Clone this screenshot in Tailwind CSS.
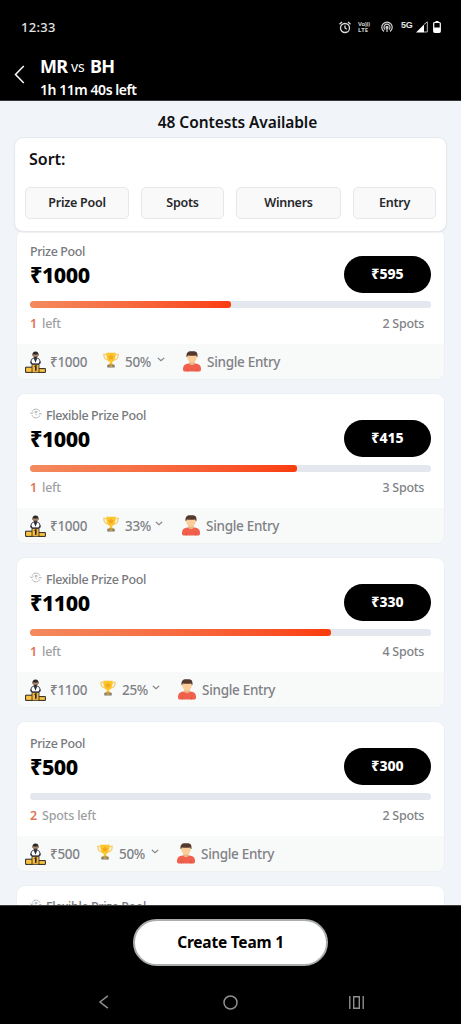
<!DOCTYPE html>
<html lang="en">
<head>
<meta charset="utf-8">
<title>Contests</title>
<script src="https://cdn.jsdelivr.net/npm/@tailwindcss/browser@4"></script>
</head>
<body class="w-[461px] h-[1024px] overflow-hidden bg-[#f1f5f9] font-['Noto_Sans','Open_Sans',sans-serif] flex flex-col">

<svg class="hidden">
  <symbol id="podium" viewBox="0 0 21 22">
    <path d="M.6 16.200h7v5.200H.6zM13.400 17.600h7v3.800h-7z" fill="#f9c440" stroke="#2b2523" stroke-width="1"/>
    <path d="M7 13.500h7v7.900H7z" fill="#f6b93b" stroke="#2b2523" stroke-width=".8"/>
    <path d="M9.600 15.700l1.200-.6v4.600" fill="none" stroke="#2b2523" stroke-width="1.600"/>
    <path d="M6 12.800c-.3-3.200.5-5.300 2.400-5.500h4.200c1.900.2 2.700 2.300 2.400 5.500z" fill="#fff" stroke="#2b2f3d" stroke-width=".9"/>
    <path d="M8.700 7.300l1.800 4.400 1.800-4.400z" fill="#2b2f3d"/>
    <path d="M5.600 10.500l1.500 2.300M15.400 10.500l-1.500 2.300" stroke="#2b2f3d" stroke-width="1.200"/>
    <circle cx="10.500" cy="4.300" r="2.400" fill="#b98468"/>
    <path d="M7.500 5.200C7 2 8.200.5 10.500.5S14 2 13.500 5.200c-.7-.6-.7-1.400-1-1.900-1.300.5-2.700.5-4 0-.3.500-.3 1.300-1 1.900zM8.300 5.300c1 .7 3.400.7 4.400 0-.2 2.500-4.200 2.500-4.400 0z" fill="#2b2725"/>
  </symbol>
  <symbol id="trophy" viewBox="0 0 16 16">
    <path d="M3.500 2.500H.8c0 3.200 1.200 5.100 4.200 5.600M12.500 2.500h2.700c0 3.200-1.200 5.100-4.200 5.600" fill="none" stroke="#f6cc74" stroke-width="1.300"/>
    <path d="M3.300.8h9.400c.2 5-1.100 8.600-3.600 9.300v2.200H6.900v-2.200C4.400 9.400 3.100 5.800 3.300.8z" fill="#fcc62d"/>
    <path d="M8 2l1 2 2.200.3-1.600 1.500.4 2.200-2-1-2 1 .4-2.200-1.600-1.500L7 4z" fill="#f5a81c"/>
    <path d="M6 11.700h4l.7 1.600H5.300z" fill="#e2a52d"/>
    <path d="M4.300 12.800h7.400v2.600H4.300z" fill="#857b62"/>
    <path d="M6.500 13.500h3v1.100h-3z" fill="#efc35a"/>
  </symbol>
  <symbol id="person" viewBox="0 0 18 21">
    <path d="M0 18.200c0-4 2.200-5.300 5.500-5.700h7c3.300.4 5.500 1.700 5.500 5.700 0 1.400-.8 2.300-2.100 2.300H2.100C.8 20.500 0 19.600 0 18.200z" fill="#f0604c"/>
    <path d="M6.300 9h5.400v3.600c-.7 2.200-4.700 2.200-5.400 0z" fill="#eab683"/>
    <path d="M4 4h10c.2 4.200-1.700 7.700-5 7.700S3.800 8.200 4 4z" fill="#fbcd9b"/>
    <path d="M3.600 6.200C3 2 4.800.2 8 .2h3.200c2.800.2 3.700 2.500 3.200 6-.8-.2-1-1-1.200-1.600-2.800.3-5.600.3-8.400 0-.2.600-.4 1.400-1.200 1.600z" fill="#54392f"/>
    <path d="M4.400 17.500v3M13.600 17.500v3" stroke="#d65442" stroke-width=".7"/>
  </symbol>
  <symbol id="chev" viewBox="0 0 8 5">
    <path d="M.8.900L4 3.800 7.200.9" fill="none" stroke="#808387" stroke-width="1.200"/>
  </symbol>
  <symbol id="flex" viewBox="0 0 12 11">
    <path d="M2.200 3.500a4.200 4.200 0 0 1 7.600 0M2.200 7.500a4.200 4.200 0 0 0 7.600 0" fill="none" stroke="#8b8d90" stroke-width=".8" stroke-dasharray="2 .6"/>
    <path d="M.3 4.400l1.400 1.500 1.500-1.500M8.800 6.500l1.500-1.500 1.400 1.500" fill="none" stroke="#8b8d90" stroke-width=".8"/>
    <path d="M4.800 3.500h2.600M4.800 4.600h2.600M5.300 5.500L6.700 7.400" stroke="#8b8d90" stroke-width=".6"/>
  </symbol>
</svg>

<header class="h-[101px] shrink-0 bg-black text-white flex flex-col border-b border-[#35373b]">
  <div class="h-[54px] flex items-center justify-between pl-[21px] pr-[20px] text-[#e4e4e4]">
    <span class="mt-px text-[13px] font-medium tracking-[0.3px]">12:33</span>
    <div class="flex items-center">
      <svg class="w-[12px] h-[13px]" viewBox="0 0 12 13" fill="none" stroke="#dcdcdc" stroke-width="1.300"><circle cx="6" cy="7" r="4.500"/><path d="M6 4.500V7l1.800 1.200M.5 3.200L3 1.100M11.500 3.200L9 1.100"/></svg>
      <div class="ml-[7px] w-[14px] flex flex-col text-[6px] leading-[6px] font-bold text-[#cfcfcf]"><span class="tracking-[-0.4px]">Vo)))</span><span>LTE</span></div>
      <svg class="ml-[9px] w-[12px] h-[12px]" viewBox="0 0 12 12" fill="none" stroke="#cfcfcf" stroke-width="1.200"><path d="M3 10.500a5.200 5.200 0 1 1 6 0M4.100 8.500a3 3 0 1 1 3.800 0"/><circle cx="6" cy="6.300" r="1" fill="#cfcfcf"/><path d="M6 7v4"/></svg>
      <span class="ml-[8px] -mt-[5px] w-[13px] text-[9px] leading-[8px] font-bold tracking-[-0.3px] font-['Liberation_Sans',sans-serif]">5G</span>
      <svg class="ml-[2px] w-[12px] h-[12px]" viewBox="0 0 12 12"><path d="M0 11.500L8 3.500v8z" fill="#fff"/><path d="M8 3.500L11.300.8v10.200H8" fill="none" stroke="#bbb" stroke-width="1"/></svg>
      <svg class="ml-[5px] w-[8px] h-[12px]" viewBox="0 0 8 12"><path d="M2.500 0h3v1.500h-3z" fill="#fff"/><rect x=".7" y="1.500" width="6.600" height="9.800" rx="1" fill="none" stroke="#fff" stroke-width="1.200"/><path d="M1 6.500h6V11H1z" fill="#fff"/></svg>
    </div>
  </div>
  <div class="flex pl-[14px]">
    <svg class="w-[11px] h-[19px] mt-[11px]" viewBox="0 0 11 19" fill="none" stroke="#fff" stroke-width="1.500"><path d="M9.800 1L1.500 9.500l8.300 8.500"/></svg>
    <div class="ml-[15px] flex flex-col whitespace-nowrap">
      <div class="h-[25px] flex items-center text-[18px] font-bold leading-[25px]"><span class="w-[28px] tracking-[-0.7px]">MR</span><span class="ml-[3px] w-[16px] text-[14px] font-normal -mt-px tracking-[-0.2px]">vs</span><span class="ml-[3px] tracking-[-0.8px]">BH</span></div>
      <div class="h-[20px] text-[14px] leading-[22px] font-semibold tracking-[-0.45px]">1h 11m 40s left</div>
    </div>
  </div>
</header>

<main class="h-[804px] shrink-0 overflow-hidden flex flex-col">
  <h1 class="h-[36px] shrink-0 pt-[10px] pl-[14px] text-center text-[15.500px] leading-[22px] font-semibold tracking-[-0.08px] text-[#101114]">48 Contests Available</h1>
  <section class="relative z-10 h-[95px] shrink-0 mx-[14px] rounded-[9px] bg-white border border-[#e6e9ec] shadow-[0_1px_1px_rgba(0,0,0,0.06)] px-[10px] whitespace-nowrap">
    <h2 class="pl-[4px] pt-[10px] h-[49px] text-[16px] leading-[22px] font-semibold tracking-[0px] text-[#101114]">Sort:</h2>
    <div class="flex gap-[12px] text-[12.500px] font-semibold tracking-[-0.25px] text-[#26282b]">
      <button class="w-[104px] h-[32px] rounded-[5px] border border-[#e6e7e8] bg-[#f9f9f9]">Prize Pool</button>
      <button class="w-[83px] h-[32px] rounded-[5px] border border-[#e6e7e8] bg-[#f9f9f9]">Spots</button>
      <button class="w-[105px] h-[32px] rounded-[5px] border border-[#e6e7e8] bg-[#f9f9f9]">Winners</button>
      <button class="w-[83px] h-[32px] rounded-[5px] border border-[#e6e7e8] bg-[#f9f9f9]">Entry</button>
    </div>
  </section>
  <div id="list" class="-mt-[3px] mx-[16px] flex flex-col gap-[13px]"></div>
</main>

<footer class="h-[119px] shrink-0 bg-black flex flex-col items-center border-t border-[#3c3c3c]">
  <button class="mt-[13px] w-[195px] h-[47px] rounded-full bg-white border-2 border-[#a9adac] text-[15.500px] font-bold tracking-[-0.22px] text-black">Create Team 1</button>
  <div class="mt-[27px] w-full flex items-center pl-[98px] h-[18px]">
    <svg class="w-[11px] h-[14px]" viewBox="0 0 11 14" fill="none" stroke="#8f8f8f" stroke-width="1.500"><path d="M9.800.8L2 7l7.800 6.200"/></svg>
    <svg class="ml-[114px] w-[15px] h-[15px]" viewBox="0 0 15 15" fill="none" stroke="#8f8f8f" stroke-width="1.500"><circle cx="7.500" cy="7.500" r="6.500"/></svg>
    <svg class="ml-[111px] w-[15px] h-[13px]" viewBox="0 0 15 13" fill="none" stroke="#8f8f8f" stroke-width="1.400"><path d="M.8 0v13M14.200 0v13M4.700.7h5.600v11.600H4.700z"/></svg>
  </div>
</footer>

<script>
const contests = [
  { prize: '₹1000', price: '₹595', fill: 50, left: ['1', 'left'], spots: '2 Spots', win: '50%', flex: false, wA: 53, wP: 32, gap: 18 },
  { prize: '₹1000', price: '₹415', fill: 66.7, left: ['1', 'left'], spots: '3 Spots', win: '33%', flex: true, wA: 53, wP: 30, gap: 19 },
  { prize: '₹1100', price: '₹330', fill: 75, left: ['1', 'left'], spots: '4 Spots', win: '25%', flex: true, wA: 50, wP: 30, gap: 18 },
  { prize: '₹500', price: '₹300', fill: 0, left: ['2', 'Spots left'], spots: '2 Spots', win: '50%', flex: false, wA: 47, wP: 32, gap: 18 },
  { flex: true },
];
const label = c => `
  <div class="h-[20px] flex items-center text-[12.500px] leading-[20px] font-medium tracking-[-0.4px] text-[#77797d]">
    ${c.flex ? '<svg class="w-[12px] h-[11px] mr-[4px] -mt-[5px]"><use href="#flex"/></svg>' : ''}<span>${c.flex ? 'Flexible Prize Pool' : 'Prize Pool'}</span>
  </div>`;
document.getElementById('list').innerHTML = contests.map(c => c.prize ? `
  <article class="h-[151px] shrink-0 rounded-[9px] bg-white overflow-hidden border border-[#ecf0f3] flex flex-col whitespace-nowrap">
    <div class="h-[71px] pl-[13px] pr-[13px] flex justify-between">
      <div class="pt-[12px]">
        ${label(c)}
        <div class="h-[26px] text-[21.500px] leading-[26px] font-extrabold tracking-[-0.5px] text-black">${c.prize}</div>
      </div>
      <button class="mt-[26px] w-[87px] h-[37px] rounded-full bg-black text-white text-[14px] leading-[20px] pb-[2px] font-extrabold tracking-[0px]">${c.price}</button>
    </div>
    <div class="mx-[13px] h-[7px] shrink-0 rounded-[3px] bg-[#e5e7ee] overflow-hidden">
      <div class="h-full rounded-[3px] bg-linear-to-r from-[#f38a5e] to-[#fa3c0b]" style="width:${c.fill}%"></div>
    </div>
    <div class="h-[36px] pl-[13px] pr-[20px] pt-[5px] flex justify-between text-[12.500px] leading-[21px] font-medium tracking-[-0.2px]">
      <div class="flex gap-[5px]"><span class="font-semibold text-[#de7552]">${c.left[0]}</span><span class="text-[#9d9fa2]">${c.left[1]}</span></div>
      <span class="text-[#808286] tracking-[-0.3px]">${c.spots}</span>
    </div>
    <div class="h-[35px] shrink-0 bg-[#f8f9f9] flex items-center pl-[8px] text-[13.500px] leading-[20px] font-medium tracking-[-0.3px] text-[#7f8185]">
      <svg class="w-[21px] h-[22px]"><use href="#podium"/></svg>
      <span class="ml-[4px]" style="width:${c.wA}px">${c.prize}</span>
      <svg class="w-[16px] h-[16px] -mt-[4px]"><use href="#trophy"/></svg>
      <span class="ml-[6px]" style="width:${c.wP}px">${c.win}</span>
      <svg class="w-[8px] h-[5px] -mt-[5px]"><use href="#chev"/></svg>
      <svg class="w-[18px] h-[21px]" style="margin-left:${c.gap}px"><use href="#person"/></svg>
      <span class="ml-[6px]">Single Entry</span>
    </div>
  </article>` : `
  <article class="h-[151px] shrink-0 rounded-[9px] bg-white border border-[#ecf0f3] pt-[11px] pl-[13px]">${label(c)}</article>`).join('');
</script>
</body>
</html>
